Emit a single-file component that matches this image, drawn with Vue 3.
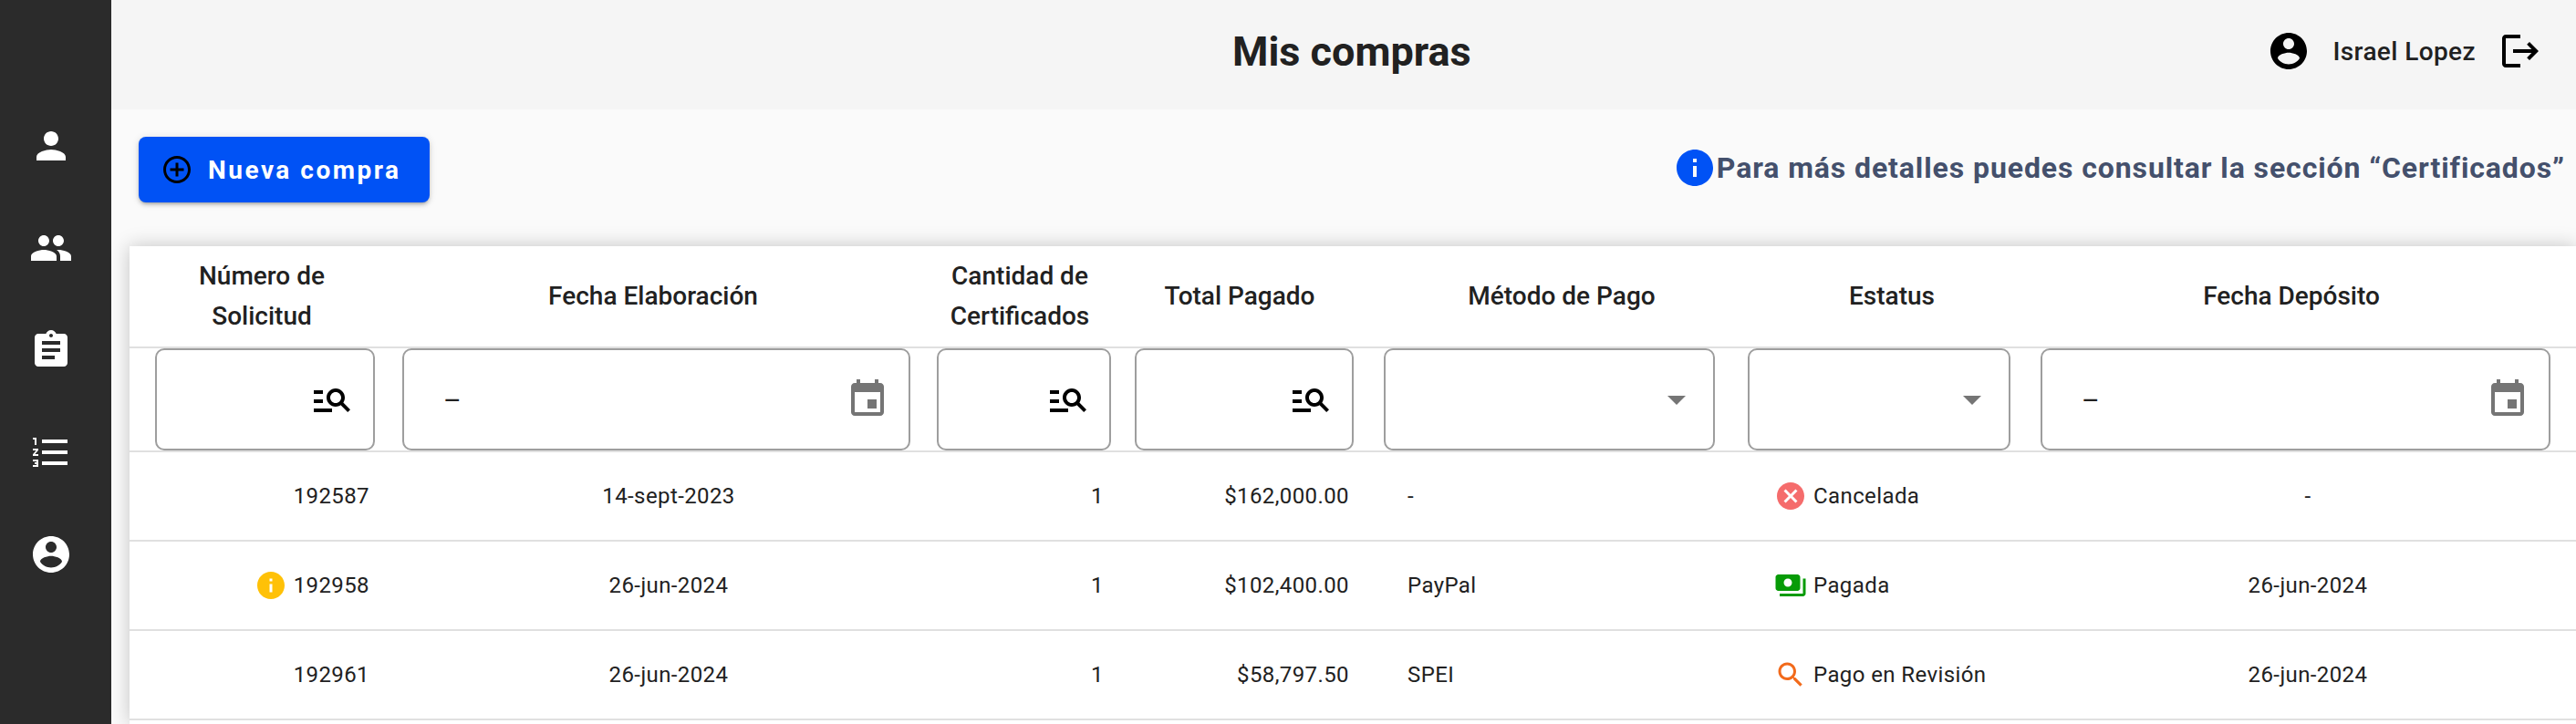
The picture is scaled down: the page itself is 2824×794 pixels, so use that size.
<template>
  <div class="page">
    <aside class="sidebar">
      <svg v-for="name in sideIcons" :key="name" class="icon48" viewBox="0 0 24 24"><path :d="icons[name]" fill="#fff" /></svg>
    </aside>

    <main class="main">
      <header class="topbar">
        <h1 class="title">Mis compras</h1>
        <div class="user">
          <svg class="icon48" viewBox="0 0 24 24"><path :d="icons.account" /></svg>
          <span class="user-name">Israel Lopez</span>
          <svg class="icon48" viewBox="0 0 24 24"><path :d="icons.logout" /></svg>
        </div>
      </header>

      <div class="toolbar">
        <button class="new-btn">
          <svg class="icon36" viewBox="0 0 24 24"><path :d="icons.addCircle" /></svg>
          Nueva compra
        </button>
        <div class="hint">
          <svg class="icon48" viewBox="0 0 24 24"><path :d="icons.info" fill="#0052f5" /></svg>
          <span>Para más detalles puedes consultar la sección “Certificados”</span>
        </div>
      </div>

      <section class="table">
        <div class="row-head">
          <div v-for="col in columns" :key="col" class="th">{{ col }}</div>
        </div>

        <div class="row-filter">
          <div v-for="(f, i) in filters" :key="i" class="filter" :class="'f-' + f">
            <span v-if="f === 'date'" class="dash">–</span>
            <svg v-if="f === 'search'" class="icon48" viewBox="0 0 24 24"><path :d="icons.manageSearch" /></svg>
            <svg v-if="f === 'date'" class="icon48" viewBox="0 0 24 24"><path :d="icons.event" fill="#757575" /></svg>
            <svg v-if="f === 'select'" class="icon48" viewBox="0 0 24 24"><path d="M7 10l5 5 5-5z" fill="#757575" /></svg>
          </div>
        </div>

        <div v-for="row in rows" :key="row.id" class="row-body">
          <div class="td num">
            <svg v-if="row.warn" class="icon36 warn" viewBox="0 0 24 24"><path :d="icons.info" fill="#ffc107" /></svg>
            {{ row.id }}
          </div>
          <div class="td center">{{ row.date }}</div>
          <div class="td num">{{ row.qty }}</div>
          <div class="td num">{{ row.total }}</div>
          <div class="td method">{{ row.method }}</div>
          <div class="td status">
            <svg class="icon36" viewBox="0 0 24 24"><path :d="icons[row.statusIcon]" :fill="row.statusColor" /></svg>
            {{ row.status }}
          </div>
          <div class="td center">{{ row.deposit }}</div>
        </div>
      </section>
    </main>
  </div>
</template>

<script setup>
const icons = {
  person: 'M12 12c2.21 0 4-1.79 4-4s-1.79-4-4-4-4 1.79-4 4 1.79 4 4 4zm0 2c-2.67 0-8 1.34-8 4v2h16v-2c0-2.66-5.33-4-8-4z',
  people: 'M16 11c1.66 0 2.99-1.34 2.99-3S17.66 5 16 5c-1.66 0-3 1.34-3 3s1.34 3 3 3zm-8 0c1.66 0 2.99-1.34 2.99-3S9.66 5 8 5C6.34 5 5 6.34 5 8s1.34 3 3 3zm0 2c-2.33 0-7 1.17-7 3.5V19h14v-2.5c0-2.33-4.67-3.5-7-3.5zm8 0c-.29 0-.62.02-.97.05 1.16.84 1.97 1.97 1.97 3.45V19h6v-2.5c0-2.33-4.67-3.5-7-3.5z',
  assignment: 'M19 3h-4.18C14.4 1.84 13.3 1 12 1c-1.3 0-2.4.84-2.82 2H5c-1.1 0-2 .9-2 2v14c0 1.1.9 2 2 2h14c1.1 0 2-.9 2-2V5c0-1.1-.9-2-2-2zm-7 0c.55 0 1 .45 1 1s-.45 1-1 1-1-.45-1-1 .45-1 1-1zm2 14H7v-2h7v2zm3-4H7v-2h10v2zm0-4H7V7h10v2z',
  listNumbered: 'M2 17h2v.5H3v1h1v.5H2v1h3v-4H2v1zm1-9h1V4H2v1h1v3zm-1 3h1.8L2 13.1v.9h3v-1H3.2L5 10.9V10H2v1zm5-6v2h14V5H7zm0 14h14v-2H7v2zm0-6h14v-2H7v2z',
  account: 'M12 2C6.48 2 2 6.48 2 12s4.48 10 10 10 10-4.48 10-10S17.52 2 12 2zm0 3c1.66 0 3 1.34 3 3s-1.34 3-3 3-3-1.34-3-3 1.34-3 3-3zm0 14.2c-2.5 0-4.71-1.28-6-3.22.03-1.99 4-3.08 6-3.08 1.99 0 5.97 1.09 6 3.08-1.29 1.94-3.5 3.22-6 3.22z',
  logout: 'M17 7l-1.41 1.41L18.17 11H8v2h10.17l-2.58 2.58L17 17l5-5zM4 5h8V3H4c-1.1 0-2 .9-2 2v14c0 1.1.9 2 2 2h8v-2H4V5z',
  addCircle: 'M13 7h-2v4H7v2h4v4h2v-4h4v-2h-4V7zm-1-5C6.48 2 2 6.48 2 12s4.48 10 10 10 10-4.48 10-10S17.52 2 12 2zm0 18c-4.41 0-8-3.59-8-8s3.59-8 8-8 8 3.59 8 8-3.59 8-8 8z',
  info: 'M12 2C6.48 2 2 6.48 2 12s4.48 10 10 10 10-4.48 10-10S17.52 2 12 2zm1 15h-2v-6h2v6zm0-8h-2V7h2v2z',
  manageSearch: 'M7 9H2V7h5v2zm0 3H2v2h5v-2zm13.59 7l-3.83-3.83c-.8.52-1.74.83-2.76.83-2.76 0-5-2.24-5-5s2.24-5 5-5 5 2.24 5 5c0 1.02-.31 1.96-.83 2.75L22 17.59 20.59 19zM17 11c0-1.65-1.35-3-3-3s-3 1.35-3 3 1.35 3 3 3 3-1.35 3-3zM2 19h10v-2H2v2z',
  event: 'M17 12h-5v5h5v-5zM16 1v2H8V1H6v2H5c-1.11 0-1.99.9-1.99 2L3 19c0 1.1.89 2 2 2h14c1.1 0 2-.9 2-2V5c0-1.1-.9-2-2-2h-1V1h-2zm3 18H5V8h14v11z',
  cancel: 'M12 2C6.47 2 2 6.47 2 12s4.47 10 10 10 10-4.47 10-10S17.53 2 12 2zm5 13.59L15.59 17 12 13.41 8.41 17 7 15.59 10.59 12 7 8.41 8.41 7 12 10.59 15.59 7 17 8.41 13.41 12 17 15.59z',
  payments: 'M19 14V6c0-1.1-.9-2-2-2H3c-1.1 0-2 .9-2 2v8c0 1.1.9 2 2 2h14c1.1 0 2-.9 2-2zm-9-1c-1.66 0-3-1.34-3-3s1.34-3 3-3 3 1.34 3 3-1.34 3-3 3zm13-6v11c0 1.1-.9 2-2 2H4v-2h17V7h2z',
  search: 'M15.5 14h-.79l-.28-.27C15.41 12.59 16 11.11 16 9.5 16 5.91 13.09 3 9.5 3S3 5.91 3 9.5 5.91 16 9.5 16c1.61 0 3.09-.59 4.23-1.57l.27.28v.79l5 4.99L20.49 19l-4.99-5zm-6 0C7.01 14 5 11.99 5 9.5S7.01 5 9.5 5 14 7.01 14 9.5 11.99 14 9.5 14z'
}

const sideIcons = ['person', 'people', 'assignment', 'listNumbered', 'account']

const columns = [
  'Número de Solicitud',
  'Fecha Elaboración',
  'Cantidad de Certificados',
  'Total Pagado',
  'Método de Pago',
  'Estatus',
  'Fecha Depósito'
]

const filters = ['search', 'date', 'search', 'search', 'select', 'select', 'date']

const rows = [
  { id: '192587', date: '14-sept-2023', qty: 1, total: '$162,000.00', method: '-', status: 'Cancelada', statusIcon: 'cancel', statusColor: '#f56c6c', deposit: '-' },
  { id: '192958', warn: true, date: '26-jun-2024', qty: 1, total: '$102,400.00', method: 'PayPal', status: 'Pagada', statusIcon: 'payments', statusColor: '#079b07', deposit: '26-jun-2024' },
  { id: '192961', date: '26-jun-2024', qty: 1, total: '$58,797.50', method: 'SPEI', status: 'Pago en Revisión', statusIcon: 'search', statusColor: '#f26a1b', deposit: '26-jun-2024' }
]
</script>

<style>
html, body {
  margin: 0;
  background: #fafafa;
}
</style>

<style scoped>
.page {
  display: flex;
  height: 794px;
  overflow: hidden;
  font-family: Roboto, "Liberation Sans", sans-serif;
  color: #212121;
  background: #fafafa;
}

.icon48 { width: 48px; height: 48px; flex: none; display: block; }
.icon36 { width: 36px; height: 36px; flex: none; display: block; }

.sidebar {
  width: 122px;
  flex: none;
  background: #2b2b2b;
  display: flex;
  flex-direction: column;
  align-items: center;
  gap: 64px;
  padding: 136px 10px 0 0;
  box-sizing: border-box;
}

.main {
  flex: 1;
  min-width: 0;
  display: flex;
  flex-direction: column;
}

.topbar {
  height: 120px;
  flex: none;
  box-sizing: border-box;
  background: #f5f5f5;
  position: relative;
  display: flex;
  align-items: center;
  justify-content: flex-end;
  padding: 0 37px 8px 0;
}

.title {
  position: absolute;
  left: 1229px;
  margin: 0;
  font-size: 45px;
  font-weight: 700;
  color: #212121;
}

.user {
  display: flex;
  align-items: center;
}

.user-name {
  font-size: 28px;
  font-weight: 500;
  letter-spacing: .4px;
  margin: 0 25px 0 24px;
}

.toolbar {
  height: 150px;
  flex: none;
  box-sizing: border-box;
  padding: 30px 12px 0 30px;
  display: flex;
  justify-content: space-between;
  align-items: flex-start;
}

.new-btn {
  width: 319px;
  height: 72px;
  border: none;
  border-radius: 8px;
  background: #0052f5;
  color: #fff;
  font-family: inherit;
  font-size: 28px;
  font-weight: 700;
  letter-spacing: 2.5px;
  display: flex;
  align-items: center;
  gap: 16px;
  padding: 0 0 0 24px;
  box-shadow: 0 3px 3px -2px rgba(0,0,0,.2), 0 3px 4px rgba(0,0,0,.14), 0 1px 8px rgba(0,0,0,.12);
}

.hint {
  display: flex;
  align-items: center;
  margin-top: 10px;
  font-size: 32px;
  font-weight: 700;
  letter-spacing: .9px;
  color: #44506c;
}

.table {
  flex: 1;
  margin-left: 20px;
  background: #fff;
  box-shadow: 0 0 20px rgba(0,0,0,.22);
}

.row-head,
.row-filter,
.row-body {
  display: grid;
  border-bottom: 2px solid #e0e0e0;
}

.row-head {
  height: 110px;
  grid-template-columns: 290px 568px 236px 246px 460px 264px 612px;
}

.th {
  display: flex;
  align-items: center;
  justify-content: center;
  text-align: center;
  font-size: 28px;
  font-weight: 500;
  line-height: 44px;
  padding: 0 24px;
}

.th:first-child { padding: 0 70px; }

.row-filter {
  height: 112px;
  padding-left: 28px;
  grid-template-columns: 271px 586px 217px 273px 399px 321px 559px;
}

.filter {
  height: 112px;
  box-sizing: border-box;
  border: 2px solid #9e9e9e;
  border-radius: 10px;
  display: flex;
  align-items: center;
  justify-content: flex-end;
  padding-right: 21px;
}

.filter:nth-child(1) { margin-right: 30px; }
.filter:nth-child(2) { margin-right: 29px; }
.filter:nth-child(3) { margin-right: 26px; }
.filter:nth-child(4) { margin-right: 33px; }
.filter:nth-child(5) { margin-right: 36px; }
.filter:nth-child(6) { margin-right: 33px; }

.f-select { padding-right: 16px; }

.f-date { justify-content: space-between; padding-left: 43px; }

.dash {
  font-size: 30px;
}

.row-body {
  height: 96px;
  grid-template-columns: 277px 628px 177px 269px 441px 284px 624px;
}

.td {
  display: flex;
  align-items: center;
  font-size: 24px;
  letter-spacing: .4px;
  white-space: nowrap;
}

.num { justify-content: flex-end; padding-right: 14px; }
.center { justify-content: center; }
.method { padding-left: 50px; }
.status { padding-left: 11px; gap: 7px; }
.warn { margin-right: 7px; }
</style>
